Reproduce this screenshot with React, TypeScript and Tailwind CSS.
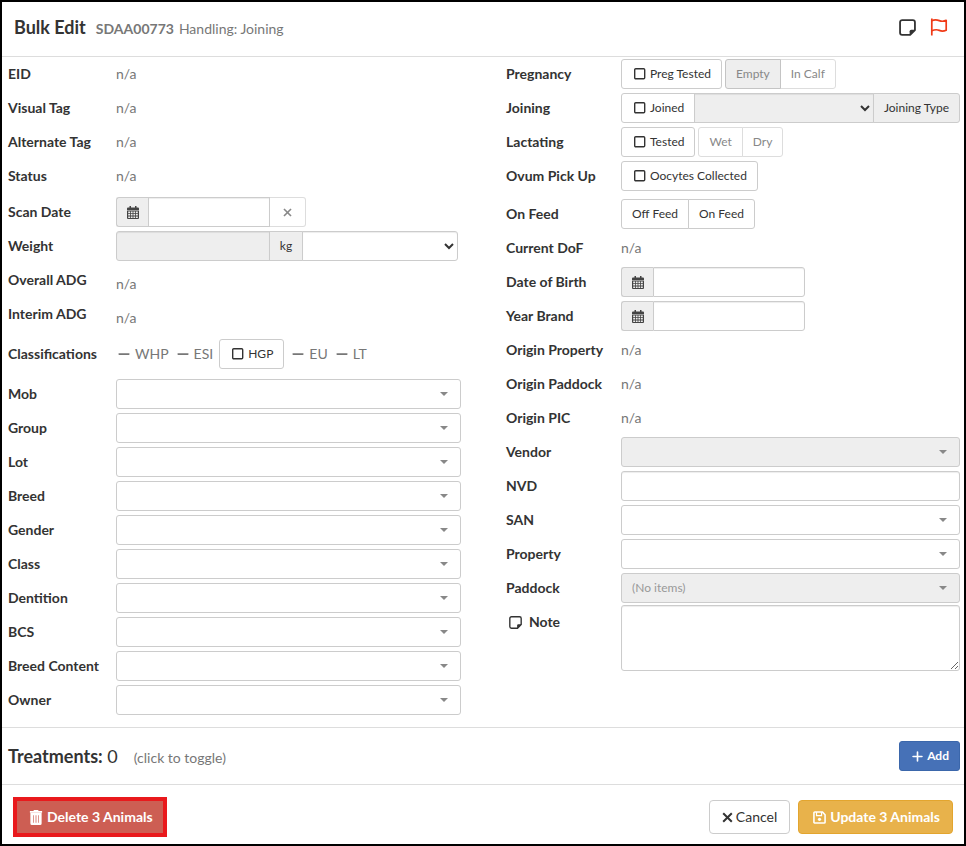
import React, { useState } from 'react';
import { FaMinus, FaPlus } from 'react-icons/fa6';

const border = 'border border-[#ccc]';
const control = 'h-[30px] text-[12px] text-[#333] outline-none';
const inset = 'shadow-[inset_0_1px_1px_rgba(0,0,0,0.075)]';

const NoteIcon = ({ className }: { className: string }) => (
  <svg viewBox="0 0 16 16" className={className} fill="none">
    <path d="M10.5 15H3a2 2 0 0 1-2-2V3a2 2 0 0 1 2-2h10a2 2 0 0 1 2 2v7.5z" stroke="currentColor" strokeWidth="1.7" strokeLinejoin="round" />
    <path d="M10 15.4V11.5A1.5 1.5 0 0 1 11.5 10h3.9z" fill="currentColor" />
  </svg>
);

const FlagIcon = ({ className }: { className: string }) => (
  <svg viewBox="0 0 18 18" className={className} fill="none" stroke="currentColor" strokeWidth="1.7">
    <path d="M1.8 0.5V17.5" />
    <path d="M1.8 2.6C5 1.2 7 1.6 9.3 2.6S13.5 3.6 16.2 2.4V12.2C13.5 13.4 11.6 13.4 9.3 12.4S5 11.4 1.8 12.8" strokeLinejoin="round" />
  </svg>
);

const TrashIcon = ({ className }: { className: string }) => (
  <svg viewBox="0 0 14 16" className={className} fill="currentColor">
    <path d="M0.5 1H4.2L4.8 0H9.2L9.8 1H13.5V3H0.5Z" />
    <path fillRule="evenodd" d="M1 3H13V14.4A1.6 1.6 0 0 1 11.4 16H2.6A1.6 1.6 0 0 1 1 14.4ZM3.8 5.5V13.5H4.5V5.5ZM6.6 5.5V13.5H7.4V5.5ZM9.5 5.5V13.5H10.2V5.5Z" />
  </svg>
);

const SaveIcon = ({ className }: { className: string }) => (
  <svg viewBox="0 0 14 14" className={className} fill="none" stroke="currentColor" strokeWidth="1.7">
    <path d="M2 1H10L13 4V12A1 1 0 0 1 12 13H2A1 1 0 0 1 1 12V2A1 1 0 0 1 2 1Z" strokeLinejoin="round" />
    <path d="M3.8 1V5H9.2V1" strokeWidth="1.3" />
    <circle cx="7" cy="9" r="1.7" fill="currentColor" stroke="none" />
  </svg>
);

const CalendarIcon = ({ className }: { className: string }) => (
  <svg viewBox="0 0 12 13" className={className} fill="currentColor">
    <path d="M2.5 0H4V1.5H8V0H9.5V1.5H11A1 1 0 0 1 12 2.5V4H0V2.5A1 1 0 0 1 1 1.5H2.5Z" />
    <path
      fillRule="evenodd"
      d="M0 4.6H12V12A1 1 0 0 1 11 13H1A1 1 0 0 1 0 12ZM1.2 5.6V7.2H3V5.6ZM3.8 5.6V7.2H5.6V5.6ZM6.4 5.6V7.2H8.2V5.6ZM9 5.6V7.2H10.8V5.6ZM1.2 8V9.6H3V8ZM3.8 8V9.6H5.6V8ZM6.4 8V9.6H8.2V8ZM9 8V9.6H10.8V8ZM1.2 10.4V12H3V10.4ZM3.8 10.4V12H5.6V10.4ZM6.4 10.4V12H8.2V10.4ZM9 10.4V12H10.8V10.4Z"
    />
  </svg>
);

const CrossIcon = ({ className }: { className: string }) => (
  <svg viewBox="0 0 11 11" className={className} fill="none" stroke="currentColor" strokeWidth="2">
    <path d="M1.2 1.2L9.8 9.8M9.8 1.2L1.2 9.8" />
  </svg>
);

interface RowProps {
  label: React.ReactNode;
  id?: string;
  className?: string;
  children: React.ReactNode;
}

const Row: React.FC<RowProps> = ({ label, id, className = 'mb-1', children }) => (
  <div className={`flex min-h-[30px] ${className}`}>
    <label htmlFor={id} className="w-(--label) shrink-0 text-[14px] leading-[30px] font-bold whitespace-nowrap">
      {label}
    </label>
    <div className="flex min-w-0 flex-1 items-center">{children}</div>
  </div>
);

const NotAvailable = () => <span className="block text-[14px] leading-[22px] text-[#777]">n/a</span>;

const Check: React.FC<{ label: string; className?: string }> = ({ label, className = 'rounded-[3px]' }) => {
  const [checked, setChecked] = useState(false);
  return (
    <label className={`flex h-[30px] shrink-0 cursor-pointer items-center gap-[2px] bg-white px-[10px] text-[12px] ${border} ${className}`}>
      <input type="checkbox" className="sr-only" checked={checked} onChange={() => setChecked(!checked)} />
      <svg viewBox="0 0 16 12" className="h-3 w-4" fill="none" stroke="currentColor" strokeWidth="1.4">
        <rect x="2.7" y="0.7" width="10" height="10" rx="1" />
        {checked && <path d="M5 6L7 8L11 3.5" />}
      </svg>
      {label}
    </label>
  );
};

const Pair: React.FC<{ options: string[]; disabled?: boolean; active?: string }> = ({ options, disabled, active }) => (
  <div className="flex">
    {options.map((option) => (
      <button
        key={option}
        type="button"
        disabled={disabled}
        className={`h-[30px] border px-[10px] text-[12px] not-first:-ml-px first:rounded-l-[3px] last:rounded-r-[3px] ${
          disabled ? 'text-[#888]' : 'text-[#333]'
        } ${active === option ? 'z-10 border-[#c4c4c4] bg-[#eee]' : disabled ? 'border-[#ddd] bg-white' : 'border-[#ccc] bg-white'}`}
      >
        {option}
      </button>
    ))}
  </div>
);

const Dropdown: React.FC<{ id: string; disabled?: boolean; text?: string }> = ({ id, disabled, text = '' }) => (
  <div className="relative w-full">
    <select
      id={id}
      disabled={disabled}
      className={`w-full appearance-none rounded-[3px] px-[10px] ${control} ${border} disabled:bg-[#eee] disabled:text-[#999] disabled:opacity-100`}
    >
      <option>{text}</option>
    </select>
    <svg viewBox="0 0 8 4" className="pointer-events-none absolute top-[13px] right-[13px] h-1 w-2">
      <path d="M0 0H8L4 4Z" fill="#888" />
    </svg>
  </div>
);

const CalendarAddon = () => (
  <span className={`flex w-8 shrink-0 items-center justify-center rounded-l-[3px] border-r-0 bg-[#eee] ${control} ${border}`}>
    <CalendarIcon className="h-[13px] w-3 text-[#444]" />
  </span>
);

const Flat = ({ label }: { label: string }) => (
  <span className="flex items-center gap-[3px] text-[14px] leading-[18px] text-[#777]">
    <span className="flex w-4 justify-center">
      <FaMinus size={14} />
    </span>
    {label}
  </span>
);

const leftDropdowns = ['Mob', 'Group', 'Lot', 'Breed', 'Gender', 'Class', 'Dentition', 'BCS', 'Breed Content', 'Owner'];

export default function App() {
  const [showTreatments, setShowTreatments] = useState(false);

  return (
    <form
      className="min-h-screen border-2 border-black bg-white font-['Lato',sans-serif] text-[#333]"
      onSubmit={(e) => e.preventDefault()}
    >
      <header className="flex h-[55px] items-center justify-between border-b border-[#ddd] pr-4 pb-1 pl-3">
        <div className="flex items-baseline gap-[5px] text-[14px] text-[#777]">
          <h4 className="mr-[5px] text-[18px] font-bold text-[#333]">Bulk Edit</h4>
          <strong>SDAA00773</strong>
          <span>Handling: Joining</span>
        </div>
        <div className="flex items-center gap-[14px]">
          <button type="button" aria-label="Note">
            <NoteIcon className="size-[17px]" />
          </button>
          <button type="button" aria-label="Flag" className="text-[#f03a17]">
            <FlagIcon className="size-[18px]" />
          </button>
        </div>
      </header>

      <main className="grid grid-cols-2 pt-[2px] pb-2">
        <section className="pr-[22px] pl-[6px] [--label:108px]">
          <Row label="EID"><NotAvailable /></Row>
          <Row label="Visual Tag"><NotAvailable /></Row>
          <Row label="Alternate Tag"><NotAvailable /></Row>
          <Row label="Status" className="mb-[6px]"><NotAvailable /></Row>
          <Row label="Scan Date" id="scan-date">
            <div className="flex w-[190px]">
              <CalendarAddon />
              <input id="scan-date" type="text" className={`min-w-0 flex-1 px-[10px] ${control} ${border} ${inset}`} />
              <button type="button" aria-label="Clear" className="flex h-[30px] w-9 items-center justify-center rounded-r-[3px] border border-l-0 border-[#ddd] text-[#888]">
                <CrossIcon className="size-[9px]" />
              </button>
            </div>
          </Row>
          <Row label="Weight" id="weight">
            <div className="flex w-[342px]">
              <input id="weight" type="text" disabled className={`w-[154px] rounded-l-[3px] bg-[#eee] px-[10px] ${control} ${border} ${inset}`} />
              <span className={`-ml-px flex w-[34px] items-center justify-center bg-[#eee] ${control} ${border}`}>kg</span>
              <select aria-label="Weight type" className={`-ml-px min-w-0 flex-1 rounded-r-[3px] bg-white ${control} ${border} ${inset}`}>
                <option></option>
              </select>
            </div>
          </Row>
          <Row label="Overall ADG"><div className="pt-2"><NotAvailable /></div></Row>
          <Row label="Interim ADG" className="mb-[10px]"><div className="pt-2"><NotAvailable /></div></Row>
          <Row label="Classifications" className="mb-[10px]">
            <div className="flex items-center gap-[6px]">
              <Flat label="WHP" />
              <Flat label="ESI" />
              <Check label="HGP" />
              <Flat label="EU" />
              <Flat label="LT" />
            </div>
          </Row>
          {leftDropdowns.map((name) => (
            <Row key={name} label={name} id={name}>
              <Dropdown id={name} />
            </Row>
          ))}
        </section>

        <section className="pr-1 pl-[23px] [--label:115px]">
          <Row label="Pregnancy">
            <div className="flex gap-[3px]">
              <Check label="Preg Tested" />
              <Pair options={['Empty', 'In Calf']} disabled active="Empty" />
            </div>
          </Row>
          <Row label="Joining">
            <Check label="Joined" className="rounded-l-[3px]" />
            <select aria-label="Joining" disabled className={`-ml-px min-w-0 flex-1 bg-[#eee] disabled:opacity-100 ${control} ${border} ${inset}`}>
              <option></option>
            </select>
            <span className={`-ml-px flex shrink-0 items-center rounded-r-[3px] bg-[#eee] px-[10px] ${control} ${border}`}>Joining Type</span>
          </Row>
          <Row label="Lactating">
            <div className="flex gap-[3px]">
              <Check label="Tested" />
              <Pair options={['Wet', 'Dry']} disabled />
            </div>
          </Row>
          <Row label="Ovum Pick Up" className="mb-2">
            <Check label="Oocytes Collected" />
          </Row>
          <Row label="On Feed">
            <Pair options={['Off Feed', 'On Feed']} />
          </Row>
          <Row label="Current DoF"><NotAvailable /></Row>
          {['Date of Birth', 'Year Brand'].map((name) => (
            <Row key={name} label={name} id={name}>
              <div className="flex w-[184px]">
                <CalendarAddon />
                <input id={name} type="text" className={`min-w-0 flex-1 rounded-r-[3px] px-[10px] ${control} ${border} ${inset}`} />
              </div>
            </Row>
          ))}
          <Row label="Origin Property"><NotAvailable /></Row>
          <Row label="Origin Paddock"><NotAvailable /></Row>
          <Row label="Origin PIC"><NotAvailable /></Row>
          <Row label="Vendor" id="vendor"><Dropdown id="vendor" disabled /></Row>
          <Row label="NVD" id="nvd">
            <input id="nvd" type="text" className={`w-full rounded-[3px] px-[10px] ${control} ${border} ${inset}`} />
          </Row>
          <Row label="SAN" id="san"><Dropdown id="san" /></Row>
          <Row label="Property" id="property"><Dropdown id="property" /></Row>
          <Row label="Paddock" id="paddock" className="mb-[2px]"><Dropdown id="paddock" disabled text="(No items)" /></Row>
          <Row
            id="note"
            label={
              <span className="flex h-[34px] items-center gap-[7px] pl-[3px]">
                <NoteIcon className="size-[13px]" />
                Note
              </span>
            }
          >
            <textarea id="note" className={`h-[66px] w-full rounded-[3px] px-[10px] py-[5px] text-[12px] outline-none ${border} ${inset}`} />
          </Row>
        </section>
      </main>

      <section className="flex h-[58px] items-center justify-between border-y border-[#ddd] pr-1 pl-[6px]">
        <button type="button" className="flex items-baseline gap-4" onClick={() => setShowTreatments(!showTreatments)} aria-expanded={showTreatments}>
          <span className="text-[18px]"><b>Treatments:</b> 0</span>
          <span className="text-[14px] text-[#777]">(click to toggle)</span>
        </button>
        <button type="button" className="flex h-[30px] items-center gap-[2px] rounded-[3px] border border-[#3b67ab] bg-[#4671b7] px-[10px] text-[12px] font-bold text-white">
          <span className="flex w-[15px] justify-center">
            <FaPlus size={13} />
          </span>
          Add
        </button>
      </section>

      <footer className="flex items-center justify-between px-[11px] pt-3 pb-[6px] text-[14px] leading-[18px]">
        <button type="button" className="flex h-10 items-center gap-1 border-4 border-[#e9191c] bg-[#cd5e53] pr-[10px] pl-3 font-bold text-white">
          <TrashIcon className="h-[15px] w-[14px]" />
          Delete 3 Animals
        </button>
        <div className="flex gap-2">
          <button type="button" className={`flex h-[34px] items-center gap-[3px] rounded-[4px] px-3 ${border}`}>
            <CrossIcon className="size-[11px]" />
            Cancel
          </button>
          <button type="submit" className="flex h-[34px] items-center gap-[3px] rounded-[4px] border border-[#e3a52e] bg-[#e8b24b] px-3 font-bold text-white">
            <span className="flex w-4 justify-center">
              <SaveIcon className="size-[13px]" />
            </span>
            Update 3 Animals
          </button>
        </div>
      </footer>
    </form>
  );
}
